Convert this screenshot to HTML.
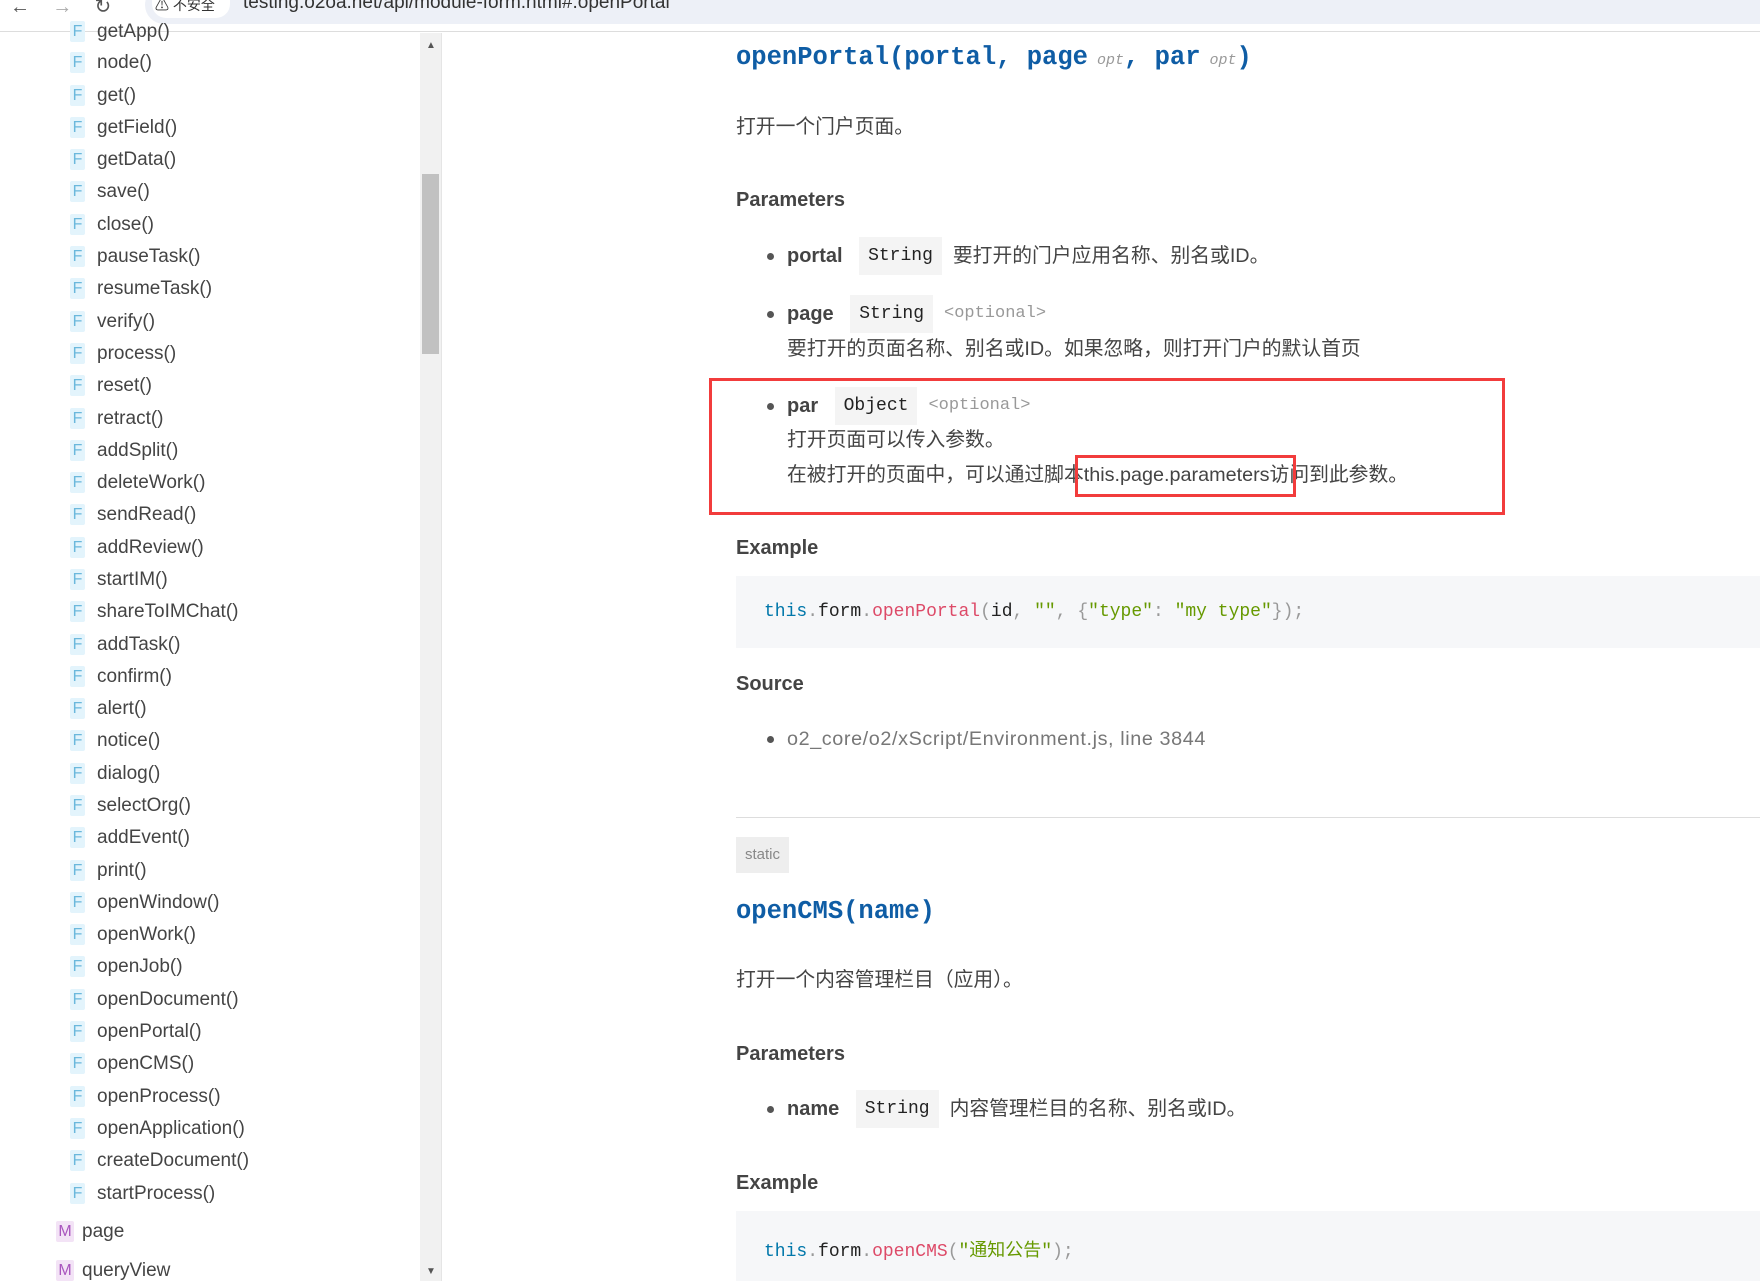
<!DOCTYPE html>
<html><head><meta charset="utf-8"><style>
*{margin:0;padding:0;box-sizing:border-box}
body{width:1760px;height:1281px;position:relative;overflow:hidden;background:#fff;font-family:"Liberation Sans","Noto Sans CJK SC",sans-serif;color:#333}
.a{position:absolute;white-space:nowrap}
.top{position:absolute;left:0;top:0;width:1760px;height:32px;background:#fff;border-bottom:1px solid #ddd}
.url{position:absolute;left:145px;top:-14px;width:1640px;height:38px;background:#edf0f7;border-radius:19px}
.si{position:absolute;left:70px;font-size:19px;color:#444;line-height:22px}
.si b{display:inline-block;width:15px;height:21px;background:#e3f4fc;color:#6bb8dc;font-weight:normal;font-size:16px;text-align:center;border-radius:2px;margin-right:12px;vertical-align:top}
.mi{position:absolute;left:56px;font-size:19px;color:#444;line-height:22px}
.mi b{display:inline-block;width:18px;height:21px;background:#f3e3f6;color:#a955be;font-weight:normal;font-size:16px;text-align:center;border-radius:2px;margin-right:8px;vertical-align:top}
.mono{font-family:"Liberation Mono","DejaVu Sans Mono",monospace}
.h4{font-family:"Liberation Mono",monospace;font-weight:bold;color:#0f5da5;font-size:25.5px}
.h4 i{font-style:italic;font-weight:normal;color:#999;font-size:15px}
.t{font-size:19.8px;color:#444;line-height:24px}
.h5{font-size:20px;font-weight:bold;color:#444}
.dot{position:absolute;width:7px;height:7px;border-radius:50%;background:#555}
.tag{display:inline-block;font-family:"Liberation Mono",monospace;font-size:18px;background:#f4f4f4;padding:0 9px;line-height:38px;color:#222;vertical-align:middle}
.opt{font-family:"Liberation Mono",monospace;font-size:17px;color:#999;vertical-align:middle}
.code{position:absolute;left:736px;width:1024px;background:#f6f7f9}
.k{color:#0077aa}.f{color:#dd4a68}.s{color:#669900}.p{color:#999}
</style></head><body>
<div class="top"><div class="url"></div>
<div class="a" style="left:10px;top:-6px;font-size:20px;color:#555">←&nbsp;&nbsp;&nbsp;&nbsp;<span style="color:#aaa">→</span>&nbsp;&nbsp;&nbsp;&nbsp;↻</div>
<div class="a" style="left:152px;top:-14px;width:78px;height:32px;background:#fff;border-radius:14px"></div>
<div class="a" style="left:155px;top:-5px;font-size:14px;color:#333">⚠ 不安全</div>
<div class="a" style="left:243px;top:-8px;font-size:19px;color:#333">testing.o2oa.net/api/module-form.html#.openPortal</div>
</div>
<div class="si" style="top:21px"><b>F</b>getApp()</div>
<div class="si" style="top:52px"><b>F</b>node()</div>
<div class="si" style="top:85px"><b>F</b>get()</div>
<div class="si" style="top:117px"><b>F</b>getField()</div>
<div class="si" style="top:149px"><b>F</b>getData()</div>
<div class="si" style="top:181px"><b>F</b>save()</div>
<div class="si" style="top:214px"><b>F</b>close()</div>
<div class="si" style="top:246px"><b>F</b>pauseTask()</div>
<div class="si" style="top:278px"><b>F</b>resumeTask()</div>
<div class="si" style="top:311px"><b>F</b>verify()</div>
<div class="si" style="top:343px"><b>F</b>process()</div>
<div class="si" style="top:375px"><b>F</b>reset()</div>
<div class="si" style="top:408px"><b>F</b>retract()</div>
<div class="si" style="top:440px"><b>F</b>addSplit()</div>
<div class="si" style="top:472px"><b>F</b>deleteWork()</div>
<div class="si" style="top:504px"><b>F</b>sendRead()</div>
<div class="si" style="top:537px"><b>F</b>addReview()</div>
<div class="si" style="top:569px"><b>F</b>startIM()</div>
<div class="si" style="top:601px"><b>F</b>shareToIMChat()</div>
<div class="si" style="top:634px"><b>F</b>addTask()</div>
<div class="si" style="top:666px"><b>F</b>confirm()</div>
<div class="si" style="top:698px"><b>F</b>alert()</div>
<div class="si" style="top:730px"><b>F</b>notice()</div>
<div class="si" style="top:763px"><b>F</b>dialog()</div>
<div class="si" style="top:795px"><b>F</b>selectOrg()</div>
<div class="si" style="top:827px"><b>F</b>addEvent()</div>
<div class="si" style="top:860px"><b>F</b>print()</div>
<div class="si" style="top:892px"><b>F</b>openWindow()</div>
<div class="si" style="top:924px"><b>F</b>openWork()</div>
<div class="si" style="top:956px"><b>F</b>openJob()</div>
<div class="si" style="top:989px"><b>F</b>openDocument()</div>
<div class="si" style="top:1021px"><b>F</b>openPortal()</div>
<div class="si" style="top:1053px"><b>F</b>openCMS()</div>
<div class="si" style="top:1086px"><b>F</b>openProcess()</div>
<div class="si" style="top:1118px"><b>F</b>openApplication()</div>
<div class="si" style="top:1150px"><b>F</b>createDocument()</div>
<div class="si" style="top:1183px"><b>F</b>startProcess()</div>
<div class="mi" style="top:1221px"><b>M</b>page</div>
<div class="mi" style="top:1260px"><b>M</b>queryView</div>
<div class="a" style="left:420px;top:33px;width:21px;height:1248px;background:#f1f1f1"></div>
<div class="a" style="left:422px;top:174px;width:17px;height:180px;background:#c1c1c1"></div>
<div class="a" style="left:426px;top:40px;font-size:10px;color:#555">▲</div>
<div class="a" style="left:426px;top:1266px;font-size:10px;color:#555">▼</div>
<div class="a" style="left:441px;top:33px;width:1px;height:1248px;background:#e5e5e5"></div>
<div class="a h4" style="left:736px;top:43px">openPortal(portal, page<i> opt</i>, par<i> opt</i>)</div>
<div class="a t" style="left:736px;top:115px">打开一个门户页面。</div>
<div class="a h5" style="left:736px;top:189px">Parameters</div>
<div class="dot" style="left:767px;top:253px"></div>
<div class="a t" style="left:787px;top:237px"><b style="font-size:20px;vertical-align:middle">portal</b>&nbsp;&nbsp;&nbsp;<span class="tag">String</span>&nbsp;&nbsp;<span style="vertical-align:middle">要打开的门户应用名称、别名或ID。</span></div>
<div class="dot" style="left:767px;top:311px"></div>
<div class="a t" style="left:787px;top:295px"><b style="font-size:20px;vertical-align:middle">page</b>&nbsp;&nbsp;&nbsp;<span class="tag">String</span>&nbsp;&nbsp;<span class="opt">&lt;optional&gt;</span></div>
<div class="a t" style="left:787px;top:337px">要打开的页面名称、别名或ID。如果忽略，则打开门户的默认首页</div>
<div class="a" style="left:709px;top:378px;width:796px;height:137px;border:3px solid #f23c3c"></div>
<div class="dot" style="left:767px;top:403px"></div>
<div class="a t" style="left:787px;top:387px"><b style="font-size:20px;vertical-align:middle">par</b>&nbsp;&nbsp;&nbsp;<span class="tag">Object</span>&nbsp;&nbsp;<span class="opt">&lt;optional&gt;</span></div>
<div class="a t" style="left:787px;top:428px">打开页面可以传入参数。</div>
<div class="a t" style="left:787px;top:463px">在被打开的页面中，可以通过脚本this.page.parameters访问到此参数。</div>
<div class="a" style="left:1075px;top:455px;width:221px;height:42px;border:3px solid #f23c3c"></div>
<div class="a h5" style="left:736px;top:537px">Example</div>
<div class="code" style="top:576px;height:72px"></div>
<div class="a mono" style="left:764px;top:602px;font-size:18px;color:#222"><span class="k">this</span><span class="p">.</span>form<span class="p">.</span><span class="f">openPortal</span><span class="p">(</span>id<span class="p">, </span><span class="s">""</span><span class="p">, {</span><span class="s">"type"</span><span class="p">: </span><span class="s">"my type"</span><span class="p">});</span></div>
<div class="a h5" style="left:736px;top:673px">Source</div>
<div class="dot" style="left:767px;top:736px"></div>
<div class="a t" style="left:787px;top:727px;color:#777;letter-spacing:0.6px">o2_core/o2/xScript/Environment.js, line 3844</div>
<div class="a" style="left:736px;top:817px;width:1024px;height:1px;background:#ddd"></div>
<div class="a" style="left:736px;top:837px;width:53px;height:36px;background:#eee;color:#888;font-size:15px;line-height:36px;text-align:center">static</div>
<div class="a h4" style="left:736px;top:897px">openCMS(name)</div>
<div class="a t" style="left:736px;top:968px">打开一个内容管理栏目（应用）。</div>
<div class="a h5" style="left:736px;top:1043px">Parameters</div>
<div class="dot" style="left:767px;top:1106px"></div>
<div class="a t" style="left:787px;top:1090px"><b style="font-size:20px;vertical-align:middle">name</b>&nbsp;&nbsp;&nbsp;<span class="tag">String</span>&nbsp;&nbsp;<span style="vertical-align:middle">内容管理栏目的名称、别名或ID。</span></div>
<div class="a h5" style="left:736px;top:1172px">Example</div>
<div class="code" style="top:1211px;height:70px"></div>
<div class="a mono" style="left:764px;top:1236px;font-size:18px;color:#222"><span class="k">this</span><span class="p">.</span>form<span class="p">.</span><span class="f">openCMS</span><span class="p">(</span><span class="s" style="font-family:'Liberation Mono','Noto Sans CJK SC',monospace">"通知公告"</span><span class="p">);</span></div>
</body></html>
